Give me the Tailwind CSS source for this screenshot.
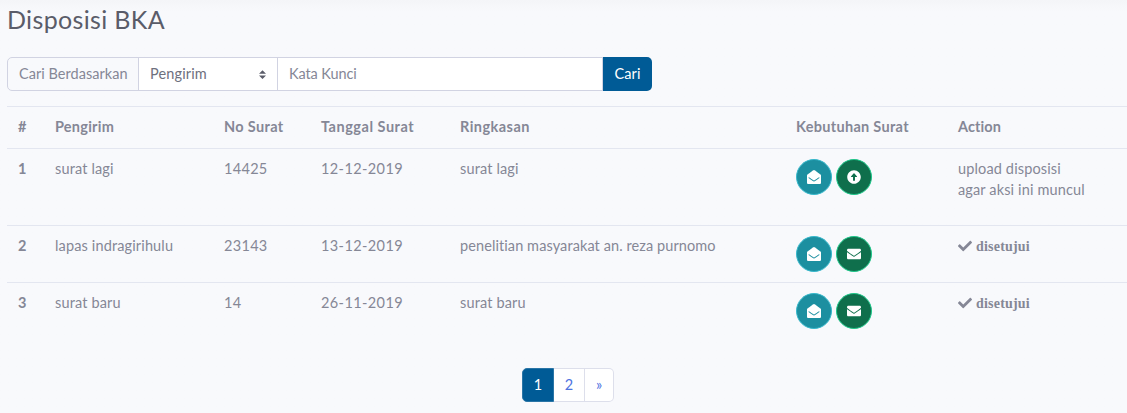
<!DOCTYPE html>
<html lang="id">
<head>
<meta charset="utf-8">
<title>Disposisi BKA</title>
<script src="https://cdn.jsdelivr.net/npm/@tailwindcss/browser@4"></script>
</head>
<body class="h-[413px] overflow-hidden bg-[#f8f9fc] bg-linear-to-b from-[#f4f5f8] to-[#f8f9fc] to-[12px] pl-[7px] font-['Lato',sans-serif] text-[14.5px] leading-[21px] tracking-[0.14px] text-[#858796]">
<svg class="hidden">
  <symbol id="open" viewBox="0 0 512 512"><path fill="currentColor" d="M512 464c0 26.510-21.490 48-48 48H48c-26.510 0-48-21.490-48-48V200.724a48 48 0 0 1 18.387-37.776c24.913-19.529 45.501-35.365 164.200-121.511C199.412 29.170 232.797-.347 256 .003c23.198-.354 56.596 29.172 73.413 41.433 118.687 86.137 139.303 101.995 164.200 121.512A48 48 0 0 1 512 200.724V464zm-65.666-196.605c-2.563-3.728-7.700-4.595-11.339-1.907-22.845 16.873-55.462 40.705-105.582 77.079-16.825 12.266-50.210 41.781-73.413 41.430-23.211.344-56.559-29.143-73.413-41.430-50.114-36.370-82.734-60.204-105.582-77.079-3.639-2.688-8.776-1.821-11.339 1.907l-9.072 13.196a7.998 7.998 0 0 0 1.839 10.967c22.887 16.899 55.454 40.690 105.303 76.868 20.274 14.781 56.524 47.813 92.264 47.573 35.724.242 71.961-32.771 92.263-47.573 49.850-36.179 82.418-59.970 105.303-76.868a7.998 7.998 0 0 0 1.839-10.967l-9.071-13.196z"/></symbol>
  <symbol id="mail" viewBox="0 0 512 512"><path fill="currentColor" d="M502.300 190.800c3.900-3.100 9.700-.2 9.700 4.700V400c0 26.500-21.500 48-48 48H48c-26.500 0-48-21.500-48-48V195.600c0-5 5.700-7.800 9.700-4.700 22.400 17.400 52.100 39.500 154.100 113.600 21.100 15.400 56.700 47.800 92.200 47.600 35.700.3 72-32.800 92.300-47.600 102-74.100 131.600-96.300 154-113.700zM256 320c23.200.4 56.600-29.200 73.400-41.400 132.700-96.300 142.800-104.700 173.400-128.700 5.800-4.500 9.200-11.500 9.200-18.900v-19c0-26.500-21.500-48-48-48H48c-26.500 0-48 21.500-48 48v19c0 7.400 3.400 14.300 9.200 18.900 30.600 23.900 40.700 32.400 173.400 128.700 16.800 12.200 50.200 41.800 73.400 41.400z"/></symbol>
  <symbol id="up" viewBox="0 0 512 512"><path fill="currentColor" fill-rule="evenodd" d="M8 256C8 119 119 8 256 8s248 111 248 248-111 248-248 248S8 393 8 256zM292 384V256h67c10.700 0 16.100-12.900 8.500-20.500l-103-114c-4.700-4.700-12.200-4.700-16.900 0l-103 114c-7.600 7.600-2.200 20.500 8.500 20.500h67v128c0 6.600 5.400 12 12 12h48c6.600 0 12-5.400 12-12z"/></symbol>
  <symbol id="check" viewBox="0 0 512 512"><path fill="currentColor" d="M173.898 439.404l-166.400-166.400c-9.997-9.997-9.997-26.206 0-36.204l36.203-36.204c9.997-9.998 26.207-9.998 36.204 0L192 312.690 432.095 72.596c9.997-9.997 26.207-9.997 36.204 0l36.203 36.204c9.997 9.997 9.997 26.206 0 36.204l-294.400 294.401c-9.998 9.997-26.207 9.997-36.204-.001z"/></symbol>
</svg>

<h1 class="mb-[23px] pt-[5px] text-[25px] leading-[29px] tracking-[0.35px] text-[#5a5c69]">Disposisi BKA</h1>

<form class="flex h-[34px] w-[645px]">
  <label class="w-[132px] rounded-l-[5px] border border-[#d1d3e2] pl-[11px] leading-[32px] tracking-[0.03px]">Cari Berdasarkan</label>
  <div class="-ml-px flex w-[140px] items-center justify-between border border-[#d1d3e2] bg-white pr-[11px] pl-[11px] text-[#6e707e]">
    <span class="-mt-px">Pengirim</span>
    <svg class="h-[9px] w-[7px]" viewBox="0 0 4 5"><path fill="#5a5c69" d="M2 0L0 2h4zm0 5L0 3h4z"/></svg>
  </div>
  <div class="-ml-px flex-1 border border-[#d1d3e2] bg-white pl-[11px] leading-[32px] tracking-[-0.1px]">Kata Kunci</div>
  <button type="button" class="w-[49px] rounded-r-[5px] bg-[#005b96] leading-[34px] text-white">Cari</button>
</form>

<table class="mt-[15px] w-[1120px] table-fixed border-collapse text-left [&_td]:p-0 [&_td]:pt-[9px] [&_td]:align-top [&_th]:p-0 [&_th]:pt-[9px] [&_th]:align-top [&_tr]:border-t [&_tr]:border-[#e3e6f0]">
  <colgroup><col class="w-[48px]"><col class="w-[169px]"><col class="w-[97px]"><col class="w-[139px]"><col class="w-[336px]"><col class="w-[162px]"><col></colgroup>
  <thead>
    <tr class="h-[42px]"><th><span class="pl-[11px]">#</span></th><th class="tracking-[0.24px]">Pengirim</th><th class="tracking-[0.35px]">No Surat</th><th class="tracking-[0.52px]">Tanggal Surat</th><th class="tracking-[0.46px]">Ringkasan</th><th class="tracking-[0.3px]">Kebutuhan Surat</th><th class="tracking-[0.1px]">Action</th></tr>
  </thead>
  <tbody>
    <tr class="h-[77px]">
      <th><span class="pl-[11px]">1</span></th><td>surat lagi</td><td class="tracking-[0.3px]">14425</td><td class="tracking-[0.4px]">12-12-2019</td><td>surat lagi</td>
      <td><div class="mt-px flex gap-1">
        <a class="flex size-9 items-center justify-center rounded-full border border-[#36b9cc] bg-[#1c8fa0] text-white"><svg class="size-[14px]"><use href="#open"/></svg></a>
        <a class="flex size-9 items-center justify-center rounded-full border border-[#1cc88a] bg-[#0f6f4c] text-white"><svg class="size-[14px]"><use href="#up"/></svg></a>
      </div></td>
      <td class="tracking-[0.14px]">upload disposisi<br>agar aksi ini muncul</td>
    </tr>
    <tr class="h-[57px]">
      <th><span class="pl-[11px]">2</span></th><td>lapas indragirihulu</td><td class="tracking-[0.3px]">23143</td><td class="tracking-[0.4px]">13-12-2019</td><td class="tracking-[0.09px]">penelitian masyarakat an. reza purnomo</td>
      <td><div class="mt-px flex gap-1">
        <a class="flex size-9 items-center justify-center rounded-full border border-[#36b9cc] bg-[#1c8fa0] text-white"><svg class="size-[14px]"><use href="#open"/></svg></a>
        <a class="flex size-9 items-center justify-center rounded-full border border-[#1cc88a] bg-[#0f6f4c] text-white"><svg class="size-[14px]"><use href="#mail"/></svg></a>
      </div></td>
      <td><div class="mt-px flex items-center gap-1 font-['Liberation_Serif',serif] text-[14px] font-bold tracking-[0.2px]"><svg class="-mt-[2px] size-[14px]"><use href="#check"/></svg>disetujui</div></td>
    </tr>
    <tr class="h-[57px]">
      <th><span class="pl-[11px]">3</span></th><td>surat baru</td><td class="tracking-[0.3px]">14</td><td class="tracking-[0.4px]">26-11-2019</td><td>surat baru</td>
      <td><div class="mt-px flex gap-1">
        <a class="flex size-9 items-center justify-center rounded-full border border-[#36b9cc] bg-[#1c8fa0] text-white"><svg class="size-[14px]"><use href="#open"/></svg></a>
        <a class="flex size-9 items-center justify-center rounded-full border border-[#1cc88a] bg-[#0f6f4c] text-white"><svg class="size-[14px]"><use href="#mail"/></svg></a>
      </div></td>
      <td><div class="mt-px flex items-center gap-1 font-['Liberation_Serif',serif] text-[14px] font-bold tracking-[0.2px]"><svg class="-mt-[2px] size-[14px]"><use href="#check"/></svg>disetujui</div></td>
    </tr>
  </tbody>
</table>

<nav class="mt-[28px] ml-[515px] flex h-[34px] w-[92px] text-center leading-[31px] tracking-normal text-[#4e73df]">
  <a class="w-[32px] rounded-l-[5px] border border-[#2a75a6] bg-[#005b96] text-white">1</a>
  <a class="w-[31px] border-y border-r border-[#dddfeb] bg-white">2</a>
  <a class="w-[29px] rounded-r-[5px] border-y border-r border-[#dddfeb] bg-white">»</a>
</nav>
</body>
</html>
